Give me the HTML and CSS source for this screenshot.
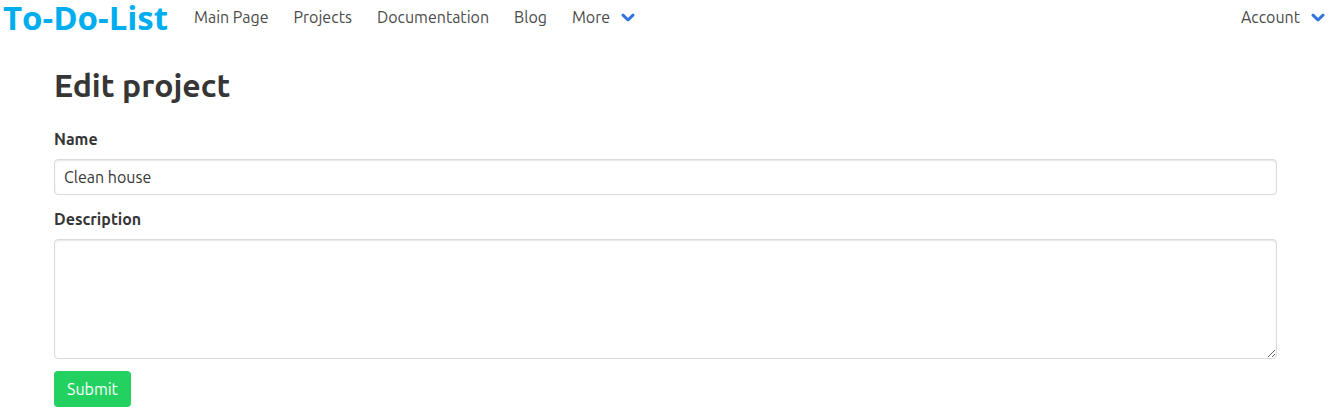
FILE: index.html
```html
<!DOCTYPE html>
<html lang="en">
<head>
<meta charset="utf-8">
<title>Edit project</title>
<link rel="stylesheet" href="styles.css">
</head>
<body>
<nav class="navbar">
  <a class="brand" href="#">To-Do-List</a>
  <a class="nav-item" href="#">Main Page</a>
  <a class="nav-item" href="#">Projects</a>
  <a class="nav-item" href="#">Documentation</a>
  <a class="nav-item" href="#">Blog</a>
  <a class="nav-item nav-link" href="#">More
    <svg class="arrow" viewBox="0 0 14 12" aria-hidden="true"><path d="M2 4.2l5 4.8 5-4.8"/></svg></a>
  <a class="nav-item nav-link nav-end" href="#">Account
    <svg class="arrow" viewBox="0 0 14 12" aria-hidden="true"><path d="M2 4.2l5 4.8 5-4.8"/></svg></a>
</nav>
<main class="container">
  <h1 class="title">Edit project</h1>
  <form class="form">
    <div class="field">
      <label class="label" for="name">Name</label>
      <input class="input" id="name" type="text" value="Clean house">
    </div>
    <div class="field">
      <label class="label" for="description">Description</label>
      <textarea class="input textarea" id="description"></textarea>
    </div>
    <button class="button" type="submit">Submit</button>
  </form>
</main>
</body>
</html>
```
FILE: styles.css
```css
* { box-sizing: border-box; }
body {
  margin: 0;
  background: #fff;
  color: #4a4a4a;
  font: 16px/24px Ubuntu, "Open Sans", "Noto Sans", sans-serif;
}
.navbar { display: flex; align-items: flex-start; gap: 1px; min-height: 35px; }
.brand {
  width: 181px;
  padding-left: 3px;
  color: #00aeef;
  font: bold 33px/35px "Open Sans", sans-serif;
  text-decoration: none;
  white-space: nowrap;
}
.nav-item { padding: 5px 12px; color: #4a4a4a; text-decoration: none; white-space: nowrap; }
.nav-link { display: flex; align-items: center; gap: 11px; }
.nav-end { margin-left: auto; padding-right: 13px; }
.arrow { width: 14px; height: 12px; fill: none; stroke: #3273dc; stroke-width: 3; stroke-linecap: round; stroke-linejoin: round; }
.container { padding: 32px 61px 8px 54px; }
.title { margin: 0 0 24px; color: #363636; font-size: 32px; line-height: 36px; font-weight: 700; }
.field { margin-bottom: 12px; }
.label { display: block; margin-bottom: 8px; color: #363636; font-weight: 700; }
.input {
  display: block;
  width: 100%;
  height: 36px;
  padding: 5px 9px;
  border: 1px solid #dbdbdb;
  border-radius: 4px;
  background: #fff;
  box-shadow: inset 0 1px 2px rgba(10, 10, 10, 0.1);
  color: #363636;
  font: inherit;
}
.textarea { height: 120px; resize: vertical; }
.button {
  height: 36px;
  padding: 5px 12px;
  border: 1px solid transparent;
  border-radius: 4px;
  background: #23d160;
  color: #fff;
  font: inherit;
}
```
